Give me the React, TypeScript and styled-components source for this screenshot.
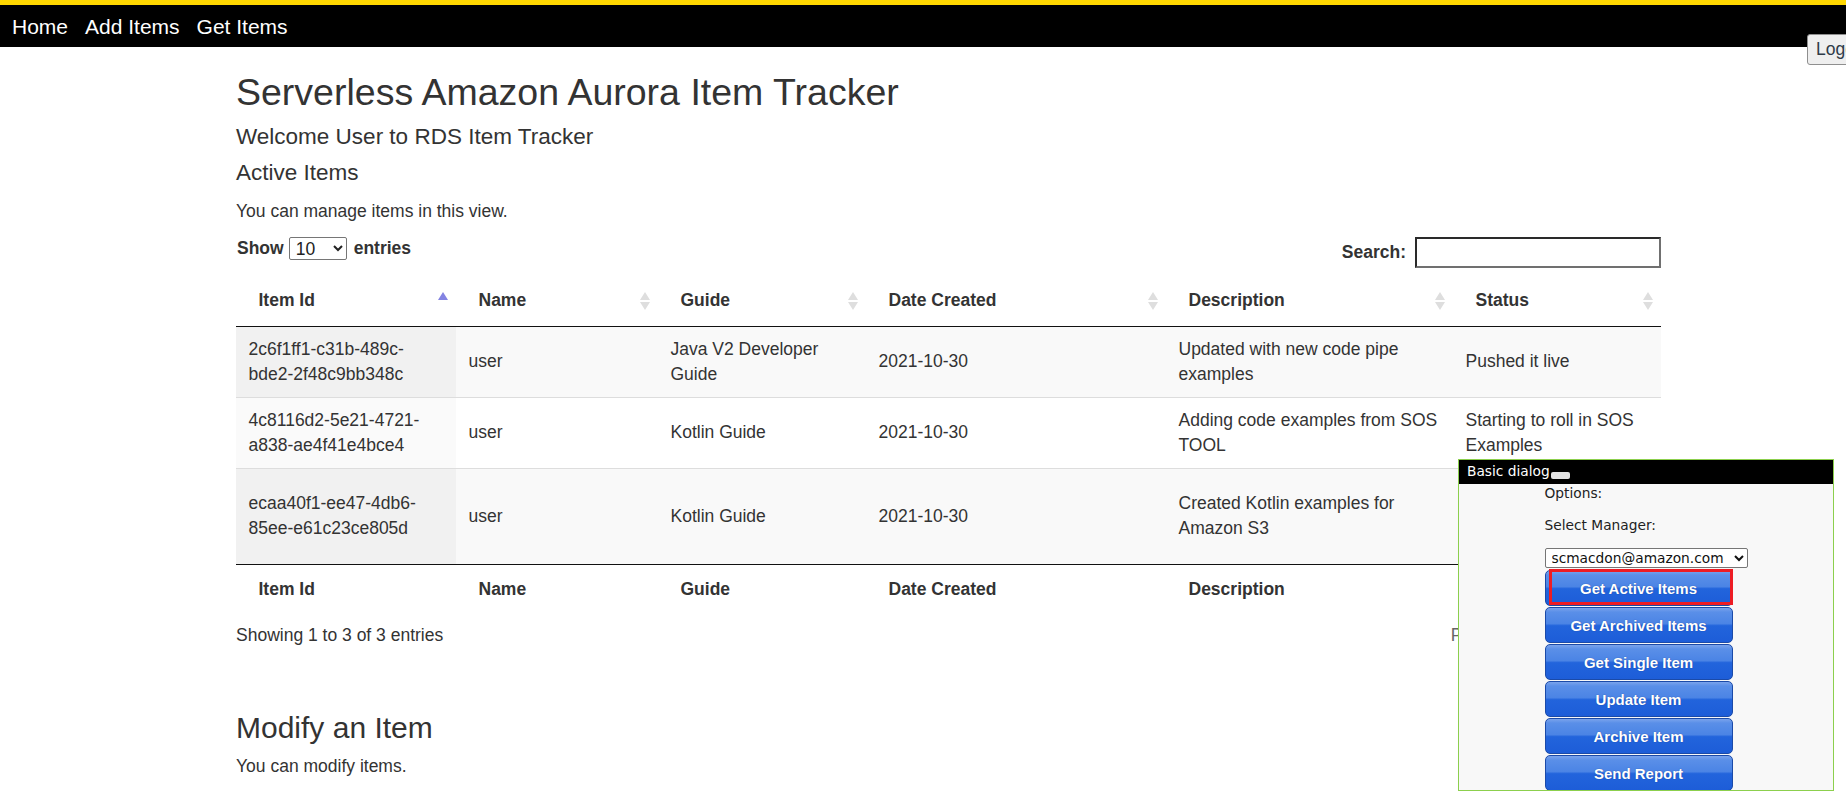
import React from "react";
import styled, { createGlobalStyle } from "styled-components";

const GlobalStyle = createGlobalStyle`
  html, body { margin: 0; padding: 0; background: #fff; }
  body {
    font-family: "Liberation Sans", Arial, Helvetica, sans-serif;
    color: #333;
    overflow: hidden;
  }
  * { box-sizing: border-box; }
`;

const Page = styled.div`
  position: relative;
  width: 1846px;
  min-height: 797px;
`;

const NavBar = styled.nav`
  height: 47px;
  background: #000;
  border-top: 5px solid #ffd700;
  display: flex;
  align-items: center;
  gap: 17px;
  padding-left: 12px;
`;

const NavLink = styled.a`
  color: #fff;
  font-size: 21px;
  line-height: 1;
  text-decoration: none;
`;

const LogoutButton = styled.button`
  position: absolute;
  top: 34px;
  left: 1807px;
  height: 31px;
  padding: 0 8px;
  font-family: "Liberation Sans", Arial, sans-serif;
  font-size: 17.5px;
  color: #2f3b48;
  background: #efefef;
  border: 1px solid #8f8f8f;
  border-radius: 3px;
  white-space: nowrap;
`;

const Main = styled.main`
  padding-left: 236px;
  width: 1661px;
`;

const Title = styled.h1`
  margin: 25px 0 0;
  font-size: 37.5px;
  line-height: 41px;
  font-weight: normal;
  color: #333;
`;

const SubTitle = styled.h3<{ $gap: number }>`
  margin: ${(p) => p.$gap}px 0 0;
  font-size: 22.5px;
  line-height: 24.75px;
  font-weight: normal;
  color: #333;
`;

const SectionTitle = styled.h2`
  margin: 62px 0 0;
  font-size: 30px;
  line-height: 33px;
  font-weight: normal;
  color: #333;
`;

const Text = styled.p<{ $gap: number }>`
  margin: ${(p) => p.$gap}px 0 0;
  font-size: 17.5px;
  line-height: 25px;
`;

const Controls = styled.div`
  margin-top: 12px;
  height: 32px;
  display: flex;
  justify-content: space-between;
  align-items: flex-start;
`;

const LengthControl = styled.label`
  display: flex;
  align-items: center;
  height: 25px;
  font-size: 17.5px;
  font-weight: bold;
  padding-left: 1px;
`;

const LengthSelect = styled.select`
  width: 58px;
  height: 23px;
  margin: 0 7px 0 5px;
  padding: 0 2px;
  font-family: "Liberation Sans", Arial, sans-serif;
  font-size: 17.5px;
  color: #222;
  background: #fff;
  border: 1px solid #767676;
  border-radius: 2px;
`;

const SearchControl = styled.label`
  display: flex;
  align-items: center;
  padding-top: 1px;
  font-size: 17.5px;
  font-weight: bold;
`;

const SearchInput = styled.input`
  width: 246px;
  height: 31px;
  margin-left: 9px;
  border-style: solid;
  border-width: 2px;
  border-color: #2a2a2a #707070 #707070 #2a2a2a;
  background: #fff;
`;

const Table = styled.table`
  margin-top: 8px;
  width: 1425px;
  table-layout: fixed;
  border-collapse: separate;
  border-spacing: 0;
  font-size: 17.5px;
  line-height: 25px;
  color: #333;
`;

const HeadCell = styled.th`
  padding: 12.5px 8px 12.5px 22.5px;
  text-align: left;
  font-weight: bold;
  border-bottom: 1px solid #111;
`;

const HeadInner = styled.div`
  display: flex;
  align-items: center;
  justify-content: space-between;
`;

const FootCell = styled.th`
  padding: 12.5px 22.5px 7.5px;
  text-align: left;
  font-weight: bold;
  border-top: 1px solid #111;
`;

const Row = styled.tr<{ $odd: boolean }>`
  background: ${(p) => (p.$odd ? "#f9f9f9" : "#fff")};
`;

const Cell = styled.td<{ $first: boolean; $sorted: boolean; $odd: boolean }>`
  padding: 10px 12.5px;
  vertical-align: middle;
  border-top: ${(p) => (p.$first ? "none" : "1px solid #ddd")};
  background: ${(p) =>
    p.$sorted ? (p.$odd ? "#f1f1f1" : "#fafafa") : "transparent"};
`;

const TableFooter = styled.div`
  margin-top: 12.5px;
  width: 1425px;
  display: flex;
  justify-content: space-between;
  align-items: center;
  font-size: 17.5px;
  line-height: 25px;
`;

const Paginate = styled.div`
  display: flex;
  align-items: center;
`;

const PageButton = styled.span<{ $current?: boolean; $disabled?: boolean }>`
  margin-left: 2px;
  padding: 0 17.5px;
  border: 1px solid ${(p) => (p.$current ? "#979797" : "transparent")};
  border-radius: 2px;
  color: ${(p) => (p.$disabled ? "#666" : "#333")};
  background: ${(p) =>
    p.$current ? "linear-gradient(to bottom, #fff 0%, #dcdcdc 100%)" : "transparent"};
`;

const Dialog = styled.div`
  position: absolute;
  left: 1458px;
  top: 459px;
  width: 376px;
  height: 332px;
  border: 1px solid #8ccf4d;
  background: #f8f8f8;
  overflow: hidden;
  font-family: "DejaVu Sans", Verdana, sans-serif;
  font-size: 13.75px;
  color: #222;
`;

const DialogTitle = styled.div`
  height: 24px;
  background: #000;
  color: #fff;
  padding-left: 8px;
  line-height: 23px;
  white-space: nowrap;
`;

const CloseBox = styled.span`
  display: inline-block;
  width: 19px;
  height: 7px;
  margin-left: 1px;
  vertical-align: -3px;
  background: #e4e4e4;
  border-radius: 2px;
`;

const DialogBody = styled.div`
  width: 203px;
  margin: 0 auto;
`;

const DialogLabel = styled.div<{ $gap: number }>`
  margin-top: ${(p) => p.$gap}px;
  line-height: 16px;
`;

const ManagerSelect = styled.select`
  display: block;
  margin-top: 15px;
  width: 203px;
  height: 20px;
  padding: 0 2px;
  font-family: "DejaVu Sans", Verdana, sans-serif;
  font-size: 13.75px;
  color: #111;
  background: #fff;
  border: 1px solid #767676;
  border-radius: 2px;
`;

const ButtonStack = styled.div`
  margin-top: 2px;
  display: flex;
  flex-direction: column;
  gap: 1px;
`;

const ActionButton = styled.button`
  position: relative;
  width: 188px;
  height: 36px;
  padding: 0;
  font-family: "Liberation Sans", Arial, sans-serif;
  font-size: 15px;
  font-weight: bold;
  color: #fff;
  text-shadow: 0 0 1px rgba(0, 20, 80, 0.5);
  background: linear-gradient(
    to bottom,
    #7aa3ec 0%,
    #5a8fe8 12%,
    #4b84e5 46%,
    #2264dc 52%,
    #1d5dd8 100%
  );
  border: 1px solid #1b4aa8;
  border-radius: 5px;
`;

const Highlight = styled.span`
  position: absolute;
  top: -2px;
  left: 3px;
  right: -1px;
  bottom: 0;
  border: 3px solid #ed1c24;
  pointer-events: none;
`;

const SortSvg = styled.svg`
  flex: none;
  width: 10px;
  height: 18px;
`;

function SortIcon({ active }: { active?: boolean }) {
  return (
    <SortSvg viewBox="0 0 10 18">
      <polygon points="0,8 5,0 10,8" fill={active ? "#8383e2" : "#dedede"} />
      {!active && <polygon points="0,10 10,10 5,18" fill="#dedede" />}
    </SortSvg>
  );
}

const columns = [
  { title: "Item Id", width: 220 },
  { title: "Name", width: 202 },
  { title: "Guide", width: 208 },
  { title: "Date Created", width: 300 },
  { title: "Description", width: 287 },
  { title: "Status", width: 208 },
];

const rows = [
  [
    "2c6f1ff1-c31b-489c-bde2-2f48c9bb348c",
    "user",
    "Java V2 Developer Guide",
    "2021-10-30",
    "Updated with new code pipe examples",
    "Pushed it live",
  ],
  [
    "4c8116d2-5e21-4721-a838-ae4f41e4bce4",
    "user",
    "Kotlin Guide",
    "2021-10-30",
    "Adding code examples from SOS TOOL",
    "Starting to roll in SOS Examples",
  ],
  [
    "ecaa40f1-ee47-4db6-85ee-e61c23ce805d",
    "user",
    "Kotlin Guide",
    "2021-10-30",
    "Created Kotlin examples for Amazon S3",
    "Need to add more code examples for Amazon S3",
  ],
];

const actions = [
  "Get Active Items",
  "Get Archived Items",
  "Get Single Item",
  "Update Item",
  "Archive Item",
  "Send Report",
];

export default function App() {
  return (
    <Page>
      <GlobalStyle />
      <NavBar>
        <NavLink href="#">Home</NavLink>
        <NavLink href="#">Add Items</NavLink>
        <NavLink href="#">Get Items</NavLink>
      </NavBar>
      <LogoutButton>Logout</LogoutButton>

      <Main>
        <Title>Serverless Amazon Aurora Item Tracker</Title>
        <SubTitle $gap={12}>Welcome User to RDS Item Tracker</SubTitle>
        <SubTitle $gap={11}>Active Items</SubTitle>
        <Text $gap={13}>You can manage items in this view.</Text>

        <Controls>
          <LengthControl>
            Show
            <LengthSelect defaultValue="10">
              <option value="10">10</option>
              <option value="25">25</option>
              <option value="50">50</option>
              <option value="100">100</option>
            </LengthSelect>
            entries
          </LengthControl>
          <SearchControl>
            Search:
            <SearchInput type="search" />
          </SearchControl>
        </Controls>

        <Table>
          <colgroup>
            {columns.map((c) => (
              <col key={c.title} style={{ width: c.width }} />
            ))}
          </colgroup>
          <thead>
            <tr>
              {columns.map((c, i) => (
                <HeadCell key={c.title}>
                  <HeadInner>
                    <span>{c.title}</span>
                    <SortIcon active={i === 0} />
                  </HeadInner>
                </HeadCell>
              ))}
            </tr>
          </thead>
          <tbody>
            {rows.map((r, ri) => (
              <Row key={r[0]} $odd={ri % 2 === 0}>
                {r.map((v, ci) => (
                  <Cell
                    key={ci}
                    $first={ri === 0}
                    $sorted={ci === 0}
                    $odd={ri % 2 === 0}
                  >
                    {v}
                  </Cell>
                ))}
              </Row>
            ))}
          </tbody>
          <tfoot>
            <tr>
              {columns.map((c) => (
                <FootCell key={c.title}>{c.title}</FootCell>
              ))}
            </tr>
          </tfoot>
        </Table>

        <TableFooter>
          <span>Showing 1 to 3 of 3 entries</span>
          <Paginate>
            <PageButton $disabled>Previous</PageButton>
            <PageButton $current>1</PageButton>
            <PageButton $disabled>Next</PageButton>
          </Paginate>
        </TableFooter>

        <SectionTitle>Modify an Item</SectionTitle>
        <Text $gap={10}>You can modify items.</Text>
      </Main>

      <Dialog>
        <DialogTitle>
          Basic dialog
          <CloseBox />
        </DialogTitle>
        <DialogBody>
          <DialogLabel $gap={1}>Options:</DialogLabel>
          <DialogLabel $gap={16}>Select Manager:</DialogLabel>
          <ManagerSelect defaultValue="scmacdon@amazon.com">
            <option value="scmacdon@amazon.com">scmacdon@amazon.com</option>
            <option value="other@amazon.com">other@amazon.com</option>
          </ManagerSelect>
          <ButtonStack>
            {actions.map((a, i) => (
              <ActionButton key={a}>
                {a}
                {i === 0 && <Highlight />}
              </ActionButton>
            ))}
          </ButtonStack>
        </DialogBody>
      </Dialog>
    </Page>
  );
}
